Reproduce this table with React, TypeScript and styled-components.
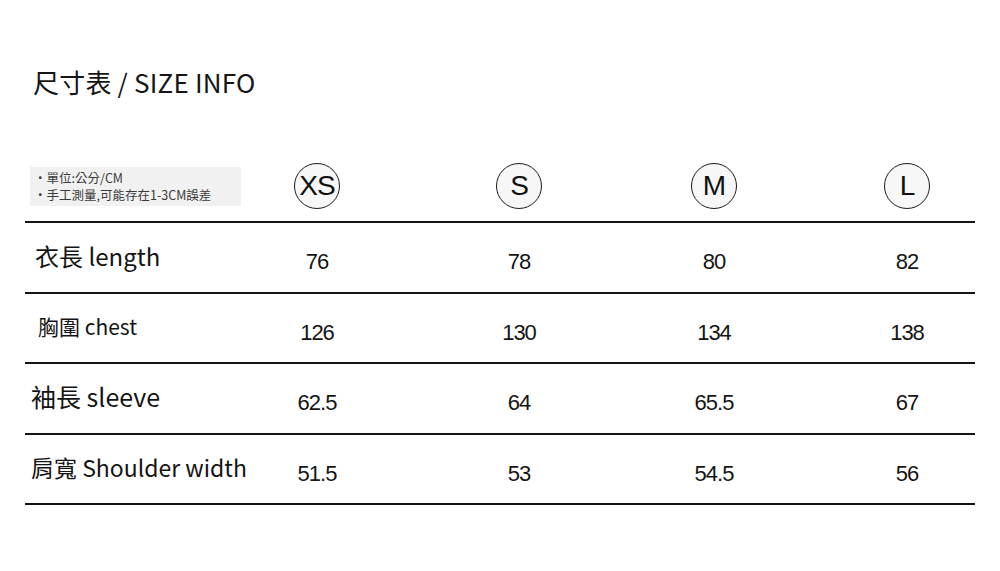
import type { FC } from 'react';
import styled, { createGlobalStyle } from 'styled-components';

type SizeRow = {
  readonly label: string;
  readonly fontSize: number;
  readonly indent: number;
  readonly values: readonly string[];
};

const SIZES = ['XS', 'S', 'M', 'L'];

const ROWS: readonly SizeRow[] = [
  { label: '衣長 length', fontSize: 24, indent: 10, values: ['76', '78', '80', '82'] },
  { label: '胸圍 chest', fontSize: 21, indent: 13, values: ['126', '130', '134', '138'] },
  { label: '袖長 sleeve', fontSize: 25, indent: 6, values: ['62.5', '64', '65.5', '67'] },
  {
    label: '肩寬 Shoulder width',
    fontSize: 23,
    indent: 6,
    values: ['51.5', '53', '54.5', '56'],
  },
];

// value cells sit in the even tracks, odd tracks are spacers
const VALUE_COLUMNS = [2, 4, 6, 8];

const App: FC = () => (
  <>
    <GlobalStyle />
    <Page>
      <Title>尺寸表 / SIZE INFO</Title>
      <Table>
        <HeaderRow>
          <LabelCell $indent={5}>
            <Note>
              <NoteLine>・單位:公分/CM</NoteLine>
              <NoteLine>・手工測量,可能存在1-3CM誤差</NoteLine>
            </Note>
          </LabelCell>
          {SIZES.map((size, i) => (
            <SizeCell key={size} $col={VALUE_COLUMNS[i]}>
              <SizeBadge>{size}</SizeBadge>
            </SizeCell>
          ))}
        </HeaderRow>
        {ROWS.map((row) => (
          <Row key={row.label}>
            <LabelCell $indent={row.indent}>
              <Label $size={row.fontSize}>{row.label}</Label>
            </LabelCell>
            {row.values.map((value, i) => (
              <ValueCell key={SIZES[i]} $col={VALUE_COLUMNS[i]}>
                {value}
              </ValueCell>
            ))}
          </Row>
        ))}
      </Table>
    </Page>
  </>
);

export default App;

const GlobalStyle = createGlobalStyle`
  html, body {
    margin: 0;
    padding: 0;
    background: #ffffff;
  }

  body {
    font-family: "Noto Sans CJK TC", "Noto Sans", sans-serif;
    color: #111111;
  }
`;

const Page = styled.div`
  width: 1000px;
  height: 571px;
  padding: 66px 0 0 25px;
  box-sizing: border-box;
  overflow: hidden;
`;

const Title = styled.h1`
  margin: 0 0 0 8px;
  font-size: 26px;
  font-weight: 400;
  line-height: 32px;
  letter-spacing: 0.2px;
  color: #151515;
`;

const Table = styled.div`
  margin-top: 53px;
  width: 950px;
`;

const Row = styled.div`
  display: grid;
  grid-template-columns: 252px 80px 122px 80px 115px 80px 113px 80px 1fr;
  align-items: center;
  height: 70.5px;
  box-sizing: border-box;
  border-bottom: 2px solid #141414;
`;

const HeaderRow = styled(Row)`
  height: 72px;
`;

const LabelCell = styled.div<{ readonly $indent: number }>`
  grid-column: 1;
  padding-left: ${({ $indent }) => $indent}px;
`;

const Label = styled.span<{ readonly $size: number }>`
  font-size: ${({ $size }) => $size}px;
  line-height: 1;
  white-space: nowrap;
  color: #141414;
`;

const Note = styled.div`
  width: 211px;
  height: 39px;
  box-sizing: border-box;
  padding: 2px 0 0 4px;
  background: #f1f1f1;
  display: flex;
  flex-direction: column;
`;

const NoteLine = styled.span`
  font-size: 12.5px;
  line-height: 17px;
  color: #3a3a3a;
  white-space: nowrap;
`;

const SizeCell = styled.div<{ readonly $col: number }>`
  grid-column: ${({ $col }) => $col};
  display: flex;
  justify-content: center;
`;

const SizeBadge = styled.div`
  width: 46px;
  height: 46px;
  box-sizing: border-box;
  border: 1.3px solid #1a1a1a;
  border-radius: 50%;
  background: #f7f7f7;
  display: flex;
  align-items: center;
  justify-content: center;
  font-family: "Liberation Sans", Arial, sans-serif;
  font-size: 28px;
  letter-spacing: -1px;
  color: #111111;
`;

const ValueCell = styled.div<{ readonly $col: number }>`
  grid-column: ${({ $col }) => $col};
  text-align: center;
  padding-top: 10px;
  font-family: "Liberation Sans", Arial, sans-serif;
  font-size: 22px;
  letter-spacing: -1px;
  color: #151515;
`;
